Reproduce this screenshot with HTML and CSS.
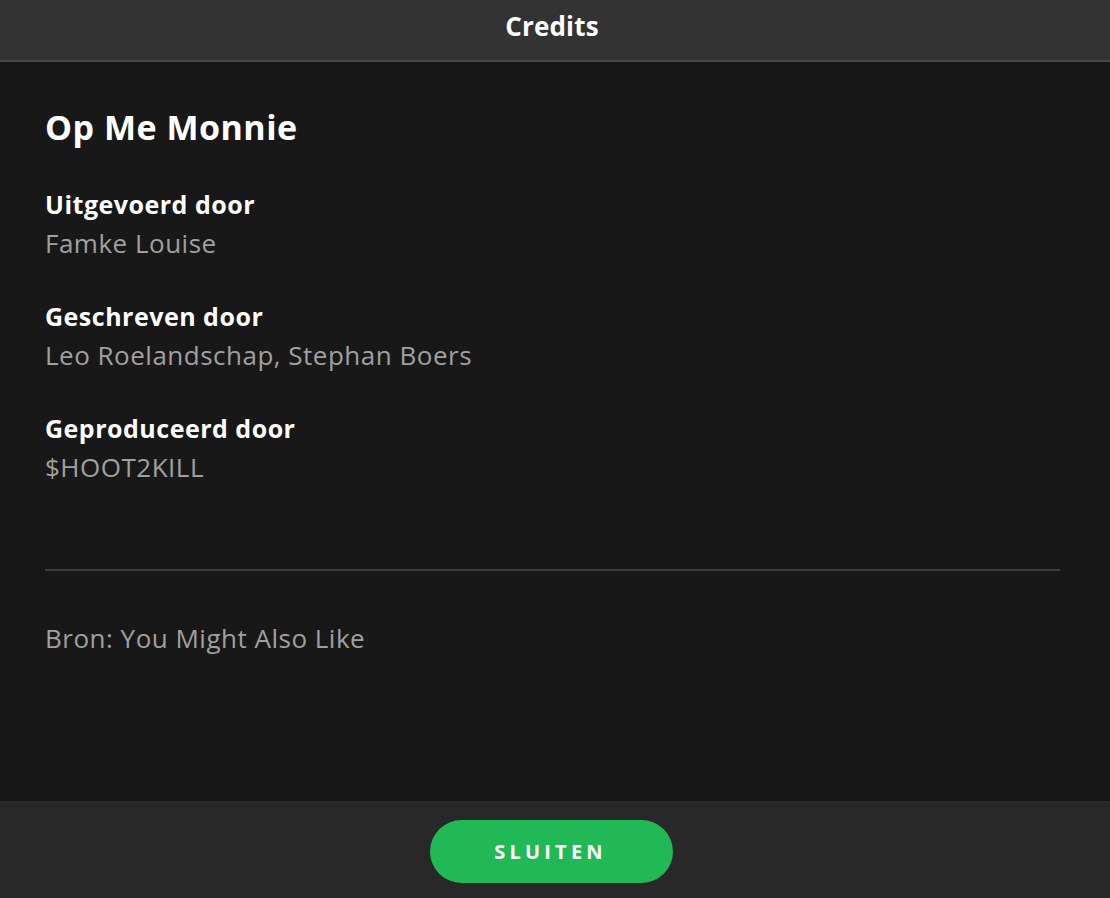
FILE: index.html
```html
<!DOCTYPE html>
<html>
<head>
<meta charset="utf-8">
<link rel="stylesheet" href="styles.css">
</head>
<body>
<div class="dialog">
  <header class="head"><h1 class="head-title">Credits</h1></header>
  <main class="content">
    <h2 class="song">Op Me Monnie</h2>
    <section class="group">
      <h3 class="role">Uitgevoerd door</h3>
      <p class="names">Famke Louise</p>
    </section>
    <section class="group">
      <h3 class="role">Geschreven door</h3>
      <p class="names">Leo Roelandschap, Stephan Boers</p>
    </section>
    <section class="group">
      <h3 class="role">Geproduceerd door</h3>
      <p class="names">$HOOT2KILL</p>
    </section>
    <hr class="divider">
    <p class="source">Bron: You Might Also Like</p>
  </main>
  <footer class="foot"><button class="close">SLUITEN</button></footer>
</div>
</body>
</html>
```
FILE: styles.css
```css
html, body { margin: 0; padding: 0; height: 100%; }
body { background: #181818; font-family: "Open Sans", "Noto Sans", sans-serif; color: #fff; }
.dialog { display: flex; flex-direction: column; height: 898px; }
.head { height: 62px; box-sizing: border-box; padding: 0 6px 8px 0; background: #333333; border-bottom: 2px solid #484848; display: flex; align-items: center; justify-content: center; flex: none; }
.head-title { margin: 0; font-size: 26px; font-weight: 700; letter-spacing: 0.2px; color: #fff; }
.content { flex: 1; padding: 45px 50px 0 45px; background: #181818; }
.song { margin: 0 0 38px; font-size: 34px; font-weight: 700; line-height: 40px; letter-spacing: 0.5px; }
.group { margin-bottom: 34px; }
.role { margin: 0; font-size: 25px; font-weight: 700; line-height: 39px; letter-spacing: 0.5px; }
.names { margin: 0; font-size: 26px; font-weight: 400; line-height: 39px; letter-spacing: 0.5px; color: #a0a0a0; }
.divider { border: none; border-top: 2px solid #3e3e3e; margin: 82px 0 0; }
.source { margin: 48px 0 0; font-size: 26px; line-height: 39px; letter-spacing: 0.5px; color: #a0a0a0; }
.foot { height: 97px; box-sizing: border-box; padding: 4px 7px 0 0; background: #282828; display: flex; align-items: center; justify-content: center; flex: none; }
.close { width: 243px; height: 63px; border: none; border-radius: 32px; background: #20b955; color: #fff; font-family: "Open Sans", sans-serif; font-weight: 700; font-size: 20px; letter-spacing: 4.2px; padding-left: 4px; }
```
